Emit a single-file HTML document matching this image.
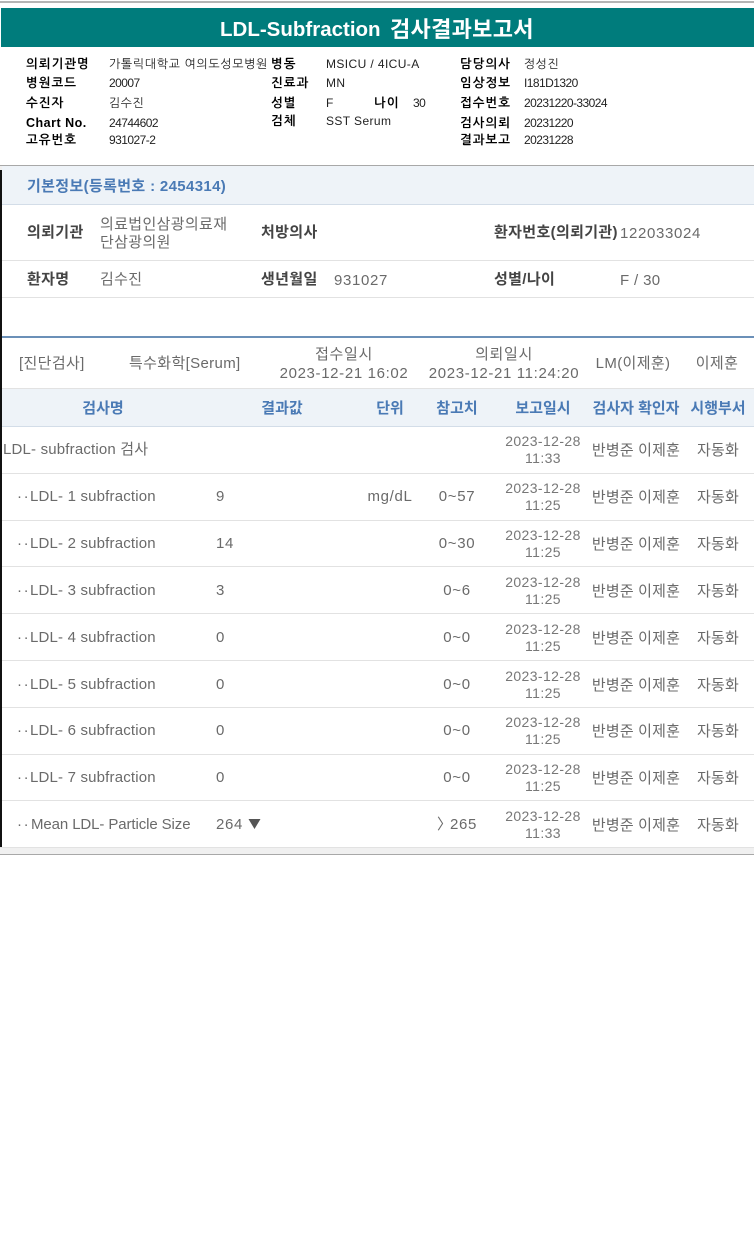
<!DOCTYPE html>
<html lang="ko"><head><meta charset="utf-8"><title>LDL-Subfraction 검사결과보고서</title>
<style>
html,body{margin:0;padding:0;background:#fff}
body{width:754px;height:1240px;position:relative;overflow:hidden;font-family:"Liberation Sans","Noto Sans CJK KR",sans-serif}
.b{position:absolute}
.t{position:absolute;white-space:nowrap;line-height:16px;font-size:15px;letter-spacing:.35px;color:#6a6a6a;margin-top:1px}
.c{transform:translateX(-50%);text-align:center}
.n{letter-spacing:.65px}
.m{letter-spacing:.18px}
.s{font-size:12px;letter-spacing:.4px;color:#222;font-family:"Liberation Sans","NanumGothic",sans-serif;line-height:14px;margin-top:0}
.x{letter-spacing:-.55px}
.k{letter-spacing:.65px}
.sb{font-size:12.5px;color:#000;font-weight:700;font-family:"Liberation Sans","NanumGothic",sans-serif;line-height:14px;letter-spacing:1px;margin-top:0}
.h{font-weight:700;color:#444}
.th{font-weight:700;color:#4a7ab5;letter-spacing:0}
.d{font-size:14px;letter-spacing:.4px;line-height:17px;color:#777;margin-top:0}
.o{letter-spacing:1.6px}
</style></head><body>
<div class="b" style="left:0;top:1px;width:754px;height:2px;background:#b5b5b5"></div>
<div class="b" style="left:1px;top:8px;width:753px;height:39px;background:#007c7c"></div>
<div class="t" style="left:220px;top:15px;line-height:28px;font-size:20.5px;font-weight:700;color:#fff;letter-spacing:0">LDL-Subfraction</div>
<div class="t" style="left:390px;top:15px;line-height:28px;font-size:22px;font-weight:700;color:#fff;letter-spacing:.3px">검사결과보고서</div>

<div class="t sb" style="left:26px;top:57px">의뢰기관명</div><div class="t s k" style="left:109px;top:57px">가톨릭대학교 여의도성모병원</div>
<div class="t sb" style="left:26px;top:76px">병원코드</div><div class="t s x" style="left:109px;top:76px">20007</div>
<div class="t sb" style="left:26px;top:96px">수진자</div><div class="t s" style="left:109px;top:96px">김수진</div>
<div class="t sb" style="left:26px;top:116px;letter-spacing:.5px">Chart No.</div><div class="t s x" style="left:109px;top:116px">24744602</div>
<div class="t sb" style="left:26px;top:133px">고유번호</div><div class="t s x" style="left:109px;top:133px">931027-2</div>

<div class="t sb" style="left:271px;top:57px">병동</div><div class="t s" style="left:326px;top:57px">MSICU / 4ICU-A</div>
<div class="t sb" style="left:271px;top:76px">진료과</div><div class="t s" style="left:326px;top:76px">MN</div>
<div class="t sb" style="left:271px;top:96px">성별</div><div class="t s" style="left:326px;top:96px">F</div>
<div class="t sb" style="left:374px;top:96px">나이</div><div class="t s x" style="left:413px;top:96px">30</div>
<div class="t sb" style="left:271px;top:114px">검체</div><div class="t s" style="left:326px;top:114px">SST Serum</div>

<div class="t sb" style="left:460px;top:57px">담당의사</div><div class="t s" style="left:524px;top:57px">정성진</div>
<div class="t sb" style="left:460px;top:76px">임상정보</div><div class="t s x" style="left:524px;top:76px">I181D1320</div>
<div class="t sb" style="left:460px;top:96px">접수번호</div><div class="t s x" style="left:524px;top:96px">20231220-33024</div>
<div class="t sb" style="left:460px;top:116px">검사의뢰</div><div class="t s x" style="left:524px;top:116px">20231220</div>
<div class="t sb" style="left:460px;top:133px">결과보고</div><div class="t s x" style="left:524px;top:133px">20231228</div>

<div class="b" style="left:0;top:165px;width:754px;height:1px;background:#a8a8a8"></div>
<div class="b" style="left:0;top:166px;width:754px;height:4px;background:#f0f0f0"></div>
<div class="b" style="left:2px;top:166px;width:752px;height:38px;background:#eef3f8;border-bottom:1px solid #d3dde8"></div>
<div class="b" style="left:0;top:170px;width:2px;height:678px;background:#111"></div>
<div class="t" style="left:27px;top:178px;font-weight:700;color:#4a7ab5">기본정보(등록번호 : 2454314)</div>

<div class="b" style="left:2px;top:260px;width:752px;height:1px;background:#e2e2e2"></div>
<div class="b" style="left:2px;top:297px;width:752px;height:1px;background:#e2e2e2"></div>
<div class="t h" style="left:27px;top:224px">의뢰기관</div>
<div class="t" style="left:100px;top:215px;line-height:18px">의료법인삼광의료재<br>단삼광의원</div>
<div class="t h" style="left:261px;top:224px">처방의사</div>
<div class="t h" style="left:494px;top:224px">환자번호(의뢰기관)</div><div class="t n" style="left:620px;top:225px">122033024</div>
<div class="t h" style="left:27px;top:271px">환자명</div><div class="t" style="left:100px;top:271px">김수진</div>
<div class="t h" style="left:261px;top:271px">생년월일</div><div class="t n" style="left:334px;top:272px">931027</div>
<div class="t h" style="left:494px;top:271px">성별/나이</div><div class="t" style="left:620px;top:272px">F / 30</div>

<div class="b" style="left:2px;top:336px;width:752px;height:2px;background:#6b90b8"></div>
<div class="t" style="left:19px;top:355px">[진단검사]</div>
<div class="t" style="left:129px;top:355px">특수화학[Serum]</div>
<div class="t c n" style="left:344px;top:344px;line-height:19px">접수일시<br>2023-12-21 16:02</div>
<div class="t c n" style="left:504px;top:344px;line-height:19px">의뢰일시<br>2023-12-21 11:24:20</div>
<div class="t c" style="left:633px;top:355px">LM(이제훈)</div>
<div class="t c" style="left:717px;top:355px">이제훈</div>

<div class="b" style="left:2px;top:388px;width:752px;height:37px;background:#eef3f8;border-top:1px solid #e2e2e2;border-bottom:1px solid #d3dde8"></div>
<div class="t th c" style="left:103px;top:400px">검사명</div>
<div class="t th c" style="left:282px;top:400px">결과값</div>
<div class="t th c" style="left:390px;top:400px">단위</div>
<div class="t th c" style="left:457px;top:400px">참고치</div>
<div class="t th c" style="left:543px;top:400px">보고일시</div>
<div class="t th c" style="left:636px;top:400px">검사자 확인자</div>
<div class="t th c" style="left:718px;top:400px">시행부서</div>

<div class="t m" style="left:3px;top:441px">LDL- subfraction 검사</div>
<div class="t d c" style="left:543px;top:433px">2023-12-28<br>11:33</div>
<div class="t c m" style="left:636px;top:442px">반병준 이제훈</div><div class="t c m" style="left:718px;top:442px">자동화</div>
<div class="b" style="left:2px;top:473px;width:752px;height:1px;background:#e2e2e2"></div>

<div class="t o" style="left:17px;top:488px">··</div><div class="t m" style="left:30px;top:488px">LDL- 1 subfraction</div><div class="t n" style="left:216px;top:488px">9</div>
<div class="t c n" style="left:390px;top:488px">mg/dL</div><div class="t c n" style="left:457px;top:488px">0~57</div>
<div class="t d c" style="left:543px;top:480px">2023-12-28<br>11:25</div>
<div class="t c m" style="left:636px;top:489px">반병준 이제훈</div><div class="t c m" style="left:718px;top:489px">자동화</div>
<div class="b" style="left:2px;top:520px;width:752px;height:1px;background:#e2e2e2"></div>

<div class="t o" style="left:17px;top:535px">··</div><div class="t m" style="left:30px;top:535px">LDL- 2 subfraction</div><div class="t n" style="left:216px;top:535px">14</div>
<div class="t c n" style="left:457px;top:535px">0~30</div>
<div class="t d c" style="left:543px;top:527px">2023-12-28<br>11:25</div>
<div class="t c m" style="left:636px;top:536px">반병준 이제훈</div><div class="t c m" style="left:718px;top:536px">자동화</div>
<div class="b" style="left:2px;top:566px;width:752px;height:1px;background:#e2e2e2"></div>

<div class="t o" style="left:17px;top:582px">··</div><div class="t m" style="left:30px;top:582px">LDL- 3 subfraction</div><div class="t n" style="left:216px;top:582px">3</div>
<div class="t c n" style="left:457px;top:582px">0~6</div>
<div class="t d c" style="left:543px;top:574px">2023-12-28<br>11:25</div>
<div class="t c m" style="left:636px;top:583px">반병준 이제훈</div><div class="t c m" style="left:718px;top:583px">자동화</div>
<div class="b" style="left:2px;top:613px;width:752px;height:1px;background:#e2e2e2"></div>

<div class="t o" style="left:17px;top:629px">··</div><div class="t m" style="left:30px;top:629px">LDL- 4 subfraction</div><div class="t n" style="left:216px;top:629px">0</div>
<div class="t c n" style="left:457px;top:629px">0~0</div>
<div class="t d c" style="left:543px;top:621px">2023-12-28<br>11:25</div>
<div class="t c m" style="left:636px;top:630px">반병준 이제훈</div><div class="t c m" style="left:718px;top:630px">자동화</div>
<div class="b" style="left:2px;top:660px;width:752px;height:1px;background:#e2e2e2"></div>

<div class="t o" style="left:17px;top:676px">··</div><div class="t m" style="left:30px;top:676px">LDL- 5 subfraction</div><div class="t n" style="left:216px;top:676px">0</div>
<div class="t c n" style="left:457px;top:676px">0~0</div>
<div class="t d c" style="left:543px;top:668px">2023-12-28<br>11:25</div>
<div class="t c m" style="left:636px;top:677px">반병준 이제훈</div><div class="t c m" style="left:718px;top:677px">자동화</div>
<div class="b" style="left:2px;top:707px;width:752px;height:1px;background:#e2e2e2"></div>

<div class="t o" style="left:17px;top:722px">··</div><div class="t m" style="left:30px;top:722px">LDL- 6 subfraction</div><div class="t n" style="left:216px;top:722px">0</div>
<div class="t c n" style="left:457px;top:722px">0~0</div>
<div class="t d c" style="left:543px;top:714px">2023-12-28<br>11:25</div>
<div class="t c m" style="left:636px;top:723px">반병준 이제훈</div><div class="t c m" style="left:718px;top:723px">자동화</div>
<div class="b" style="left:2px;top:754px;width:752px;height:1px;background:#e2e2e2"></div>

<div class="t o" style="left:17px;top:769px">··</div><div class="t m" style="left:30px;top:769px">LDL- 7 subfraction</div><div class="t n" style="left:216px;top:769px">0</div>
<div class="t c n" style="left:457px;top:769px">0~0</div>
<div class="t d c" style="left:543px;top:761px">2023-12-28<br>11:25</div>
<div class="t c m" style="left:636px;top:770px">반병준 이제훈</div><div class="t c m" style="left:718px;top:770px">자동화</div>
<div class="b" style="left:2px;top:800px;width:752px;height:1px;background:#e2e2e2"></div>

<div class="t o" style="left:17px;top:816px">··</div><div class="t" style="left:31px;top:816px;letter-spacing:-.1px">Mean LDL- Particle Size</div><div class="t n" style="left:216px;top:816px">264</div>
<svg class="b" style="left:248px;top:819px" width="13" height="11"><path d="M0.5 0H12.5L6.5 10Z" fill="#555"/></svg>
<div class="t" style="left:437px;top:816px;letter-spacing:0">〉</div><div class="t n" style="left:450px;top:816px">265</div>
<div class="t d c" style="left:543px;top:808px">2023-12-28<br>11:33</div>
<div class="t c m" style="left:636px;top:817px">반병준 이제훈</div><div class="t c m" style="left:718px;top:817px">자동화</div>

<div class="b" style="left:0;top:847px;width:754px;height:7px;background:#f0f0f0;border-top:1px solid #e2e2e2;box-sizing:border-box"></div>
<div class="b" style="left:0;top:854px;width:754px;height:1px;background:#a8a8a8"></div>
</body></html>
